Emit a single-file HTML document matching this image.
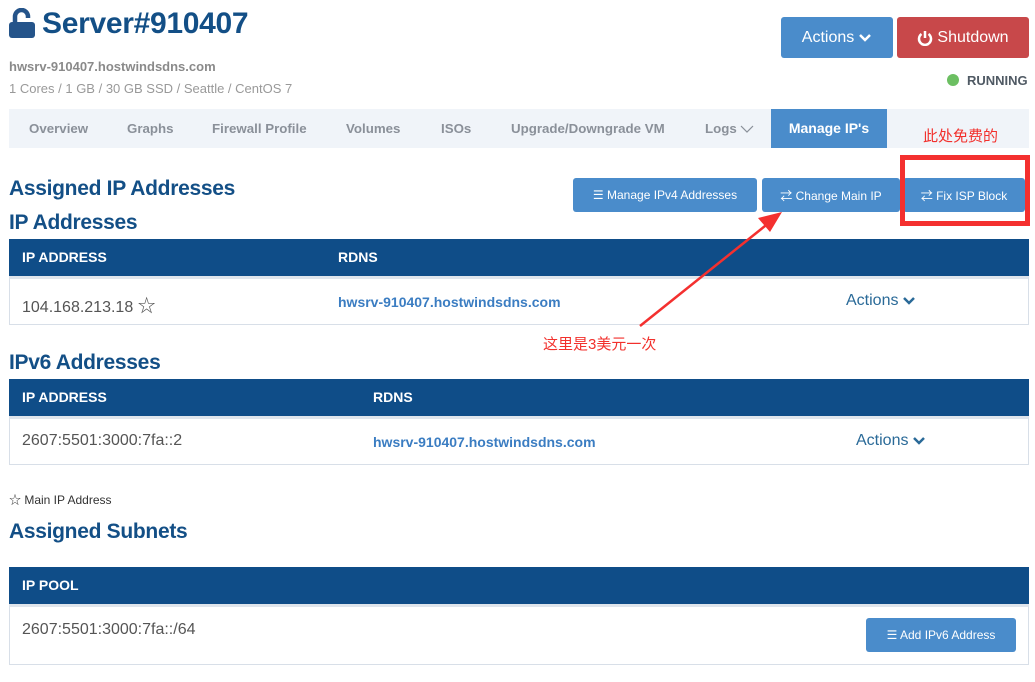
<!DOCTYPE html>
<html><head><meta charset="utf-8"><style>
*{margin:0;padding:0;box-sizing:border-box}
body{width:1035px;height:682px;background:#fff;font-family:"Liberation Sans","Noto Sans CJK SC",sans-serif;position:relative;overflow:hidden}
.a{position:absolute;white-space:nowrap}
.h{color:#134f86;font-weight:bold;font-size:21px;letter-spacing:-0.3px}
.btn{position:absolute;background:#4a8ccb;color:#fff;border-radius:3px;font-size:12px;display:flex;align-items:center;justify-content:center}
.th{position:absolute;left:9px;width:1020px;background:#0f4d88;color:#fff;font-weight:bold;font-size:14px}
.tr{position:absolute;left:9px;width:1020px;border:1px solid #d8dfe8;border-top:3px solid #dfe5ec}
.nav{position:absolute;top:109px;left:9px;width:1020px;height:39px;background:#f0f4f9}
.nav span{position:absolute;top:12px;font-size:13.3px;font-weight:bold;color:#8a9099}
.cn{color:#f2302c;font-size:15px}
.act{font-size:16px;color:#2a6a98;display:flex;align-items:center}
</style></head><body>
<svg class="a" style="left:9px;top:8px" width="27" height="30" viewBox="0 0 27 30"><path d="M6 14V8.5a6.5 6.5 0 0 1 13 0v1.5" stroke="#25548a" stroke-width="4.5" fill="none"/><rect x="0" y="14" width="26" height="16" rx="3" fill="#25548a"/></svg>
<div class="a" style="left:42px;top:7px;font-size:30px;font-weight:bold;color:#134f86;letter-spacing:-0.3px">Server#910407</div>
<div class="a" style="left:9px;top:59px;font-size:13px;font-weight:bold;color:#8a8a8a">hwsrv-910407.hostwindsdns.com</div>
<div class="a" style="left:9px;top:81px;font-size:13px;color:#999">1 Cores / 1 GB / 30 GB SSD / Seattle / CentOS 7</div>
<div class="btn" style="left:781px;top:17px;width:112px;height:41px;font-size:16px">Actions <svg width="14" height="10" style="margin-left:4px"><path d="M2 2l5 5 5-5" stroke="#fff" stroke-width="2.5" fill="none"/></svg></div>
<div class="btn" style="left:897px;top:17px;width:132px;height:41px;font-size:16px;background:#c8484a"><svg width="16" height="16" style="margin-right:4px"><path d="M4.5 4a6 6 0 1 0 7 0" stroke="#fff" stroke-width="2.5" fill="none"/><path d="M8 1v7" stroke="#fff" stroke-width="2.5"/></svg>Shutdown</div>
<div class="a" style="left:947px;top:74px;width:12px;height:12px;border-radius:50%;background:#6cbf62"></div>
<div class="a" style="left:967px;top:73px;font-size:13px;font-weight:bold;color:#505a64">RUNNING</div>
<div class="nav">
<span style="left:20px">Overview</span><span style="left:118px">Graphs</span><span style="left:203px">Firewall Profile</span><span style="left:337px">Volumes</span><span style="left:432px">ISOs</span><span style="left:502px">Upgrade/Downgrade VM</span><span style="left:696px">Logs <svg width="14" height="8"><path d="M1 1l6 6 6-6" stroke="#8a9099" stroke-width="1.2" fill="none"/></svg></span>
<div style="position:absolute;left:762px;top:0;width:116px;height:39px;background:#4a8ccb;color:#fff;font-size:14px;font-weight:bold;text-align:center;line-height:39px">Manage IP's</div>
</div>
<div class="a cn" style="left:923px;top:125px">此处免费的</div>
<div class="a h" style="left:9px;top:177px">Assigned IP Addresses</div>
<div class="btn" style="left:573px;top:178px;width:184px;height:34px">☰ Manage IPv4 Addresses</div>
<div class="btn" style="left:762px;top:178px;width:138px;height:34px">⇄ Change Main IP</div>
<div class="btn" style="left:903px;top:178px;width:122px;height:34px">⇄ Fix ISP Block</div>
<div class="a" style="left:900px;top:155px;width:130px;height:71px;border:5px solid #f4302f"></div>
<div class="a h" style="left:9px;top:211px">IP Addresses</div>
<div class="th" style="top:239px;height:37px"><span class="a" style="left:13px;top:10px">IP ADDRESS</span><span class="a" style="left:329px;top:10px">RDNS</span></div>
<div class="tr" style="top:276px;height:49px"><span class="a" style="left:12px;top:13px;font-size:16px;color:#555">104.168.213.18 <span style="font-size:18px">☆</span></span><span class="a" style="left:328px;top:15px;font-size:14px;font-weight:bold;color:#3b7dc2">hwsrv-910407.hostwindsdns.com</span><span class="a act" style="left:836px;top:13px">Actions <svg width="14" height="10" style="margin-left:4px"><path d="M2 2l5 5 5-5" stroke="#2a6a98" stroke-width="2.5" fill="none"/></svg></span></div>
<svg class="a" style="left:0;top:0" width="1035" height="682"><line x1="640" y1="326" x2="770" y2="222" stroke="#f4302f" stroke-width="2.5"/><path d="M782 212l-24 6 12 14z" fill="#f4302f"/></svg>
<div class="a cn" style="left:543px;top:333px">这里是3美元一次</div>
<div class="a h" style="left:9px;top:351px">IPv6 Addresses</div>
<div class="th" style="top:379px;height:37px"><span class="a" style="left:13px;top:10px">IP ADDRESS</span><span class="a" style="left:364px;top:10px">RDNS</span></div>
<div class="tr" style="top:416px;height:49px"><span class="a" style="left:12px;top:13px;font-size:16px;color:#555">2607:5501:3000:7fa::2</span><span class="a" style="left:363px;top:15px;font-size:14px;font-weight:bold;color:#3b7dc2">hwsrv-910407.hostwindsdns.com</span><span class="a act" style="left:846px;top:13px">Actions <svg width="14" height="10" style="margin-left:4px"><path d="M2 2l5 5 5-5" stroke="#2a6a98" stroke-width="2.5" fill="none"/></svg></span></div>
<div class="a" style="left:9px;top:491px;font-size:12px;color:#333">☆ Main IP Address</div>
<div class="a h" style="left:9px;top:520px">Assigned Subnets</div>
<div class="th" style="top:567px;height:37px"><span class="a" style="left:13px;top:10px">IP POOL</span></div>
<div class="tr" style="top:604px;height:61px"><span class="a" style="left:12px;top:14px;font-size:16px;color:#555">2607:5501:3000:7fa::/64</span></div>
<div class="btn" style="left:866px;top:618px;width:150px;height:34px">☰ Add IPv6 Address</div>
</body></html>
